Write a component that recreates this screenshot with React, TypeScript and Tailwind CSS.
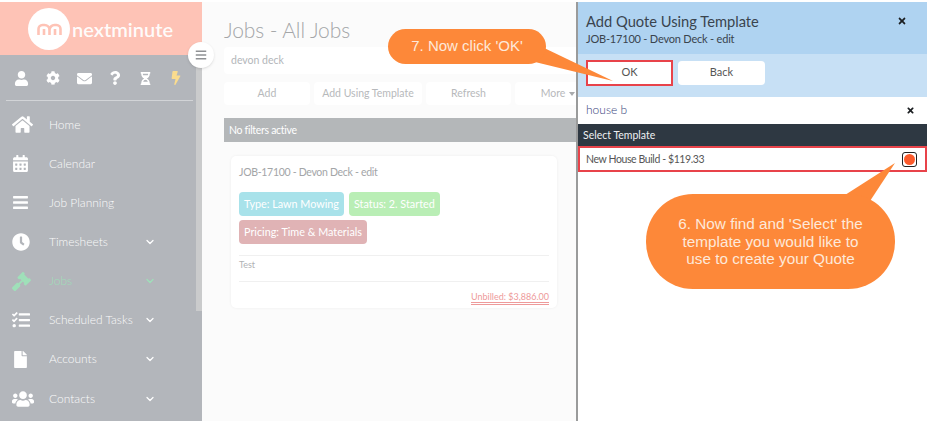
import React from "react";
import { FaUser, FaCog, FaEnvelope, FaQuestion, FaHourglassHalf, FaBolt, FaHome, FaCalendarAlt, FaBars, FaClock, FaGavel, FaTasks, FaFile, FaUsers, FaTimes } from "react-icons/fa";
import { LuChevronDown } from "react-icons/lu";

const nav = [
  { label: "Home", Icon: FaHome, size: 21 },
  { label: "Calendar", Icon: FaCalendarAlt, size: 17 },
  { label: "Job Planning", Icon: FaBars, size: 17 },
  { label: "Timesheets", Icon: FaClock, size: 18, chevron: true },
  { label: "Jobs", Icon: FaGavel, size: 19, chevron: true, active: true },
  { label: "Scheduled Tasks", Icon: FaTasks, size: 18, chevron: true },
  { label: "Accounts", Icon: FaFile, size: 17, chevron: true },
  { label: "Contacts", Icon: FaUsers, size: 22, chevron: true },
];

const toolbar = [
  { label: "Add", w: "w-[86px]" },
  { label: "Add Using Template", w: "w-[108px]" },
  { label: "Refresh", w: "w-[85px]" },
];

export default function App() {
  return (
    <div className="relative w-[927px] h-[421px] overflow-hidden bg-white pt-[2px] font-['Lato','Noto_Sans',sans-serif]">
      <div className="flex h-[419px]">
        {/* Sidebar */}
        <aside className="relative z-10 w-[202px] shrink-0 bg-[#b3b6bb] text-white">
          <div className="h-[53px] bg-[#fec3b6] flex items-center pl-[28px]">
            <div className="w-[42px] h-[42px] shrink-0 rounded-full bg-white flex items-center justify-center">
              <svg width="25" height="12" viewBox="0 0 25 12" fill="none" stroke="#fec3b6" strokeWidth="2.6">
                <path d="M1.5 12V6a4 4 0 0 1 4-4h2a5 5 0 0 1 5 5v5M12.5 12V7a5 5 0 0 1 5-5h2a4 4 0 0 1 4 4v6M7 12V6M18 12V6" />
              </svg>
            </div>
            <span className="ml-[2px] text-[20px] leading-none font-semibold text-white/95">nextminute</span>
          </div>
          <div className="absolute right-0 top-[53px] h-[256px] w-[6px] bg-[#cacbcc]" />
          <div className="absolute right-[-12px] top-[40px] w-[26px] h-[26px] rounded-full bg-white shadow-sm flex items-center justify-center text-[#8f9194]">
            <FaBars size={12} />
          </div>
          <div className="mx-[6px] w-[187px] h-[46px] border-b border-[#d2d4d7] flex items-center justify-between pl-[8px] pr-[10px] pt-[1px]">
            <FaUser size={15} />
            <FaCog size={14} />
            <FaEnvelope size={15} />
            <FaQuestion size={14} />
            <FaHourglassHalf size={13} />
            <FaBolt size={14} className="text-[#fbdc8e]" />
          </div>
          <nav className="pt-[4px]">
            {nav.map(({ label, Icon, size, chevron, active }) => (
              <div key={label} className={`flex items-center h-[39.15px] ${active ? "text-[#9fe0b9]" : "text-white"}`}>
                <div className="w-[49px] pl-[12px] flex items-center">
                  <Icon size={size} />
                </div>
                <span className="w-[93px] whitespace-nowrap text-[12px] font-light opacity-95">{label}</span>
                {chevron && <LuChevronDown size={12} strokeWidth={2.5} className="ml-[2px]" />}
              </div>
            ))}
          </nav>
        </aside>

        {/* Main */}
        <main className="relative flex-1 bg-[#fbfbfb] pl-[22px] pt-[14px] overflow-hidden">
          <h1 className="text-[21px] leading-[28px] font-light tracking-[-0.1px] text-[#a4a6a8]">Jobs - All Jobs</h1>
          <div className="mt-[3px] w-[400px] h-[27px] bg-white rounded-[4px] pl-[7px] pt-[1px] flex items-center text-[10.5px] text-[#b3b6ba]">devon deck</div>
          <div className="mt-[8px] flex gap-[4px] w-[420px] text-[10.5px] text-[#b7b9bb]">
            {toolbar.map((b) => (
              <div key={b.label} className={`${b.w} h-[23px] pt-[1px] bg-white rounded-[4px] flex items-center justify-center whitespace-nowrap`}>{b.label}</div>
            ))}
            <div className="w-[86px] h-[23px] pt-[1px] bg-white rounded-[4px] flex items-center justify-center gap-[4px]">
              More <span className="w-0 h-0 border-x-[3px] border-x-transparent border-t-[4px] border-t-[#a9abad]" />
            </div>
          </div>
          <div className="mt-[13px] w-[400px] h-[24px] pt-[1px] bg-[#b4b7b9] flex items-center pl-[5px] text-[10.5px] tracking-[-0.3px] text-white">No filters active</div>
          <section className="ml-[7px] mt-[14px] w-[326px] h-[152px] bg-white rounded-[5px] shadow-[0_0_3px_rgba(0,0,0,0.06)] px-[8px] pt-[9px]">
            <div className="text-[10.5px] leading-[14px] tracking-[-0.3px] text-[#a3a5a7]">JOB-17100 - Devon Deck - edit</div>
            <div className="mt-[13px] flex gap-[5px] text-[10.8px] text-white">
              <span className="h-[24px] px-[5px] rounded-[4px] bg-[#a8e2ea] flex items-center">Type: Lawn Mowing</span>
              <span className="h-[24px] px-[5px] rounded-[4px] bg-[#b9eeb5] flex items-center">Status: 2. Started</span>
            </div>
            <div className="mt-[4px] flex text-[10.8px] text-white">
              <span className="h-[24px] px-[5px] rounded-[4px] bg-[#e0b3b5] flex items-center">Pricing: Time &amp; Materials</span>
            </div>
            <div className="mt-[11px] border-t border-[#f0f0f0] h-[26px] pt-[3px] text-[9px] leading-[12px] text-[#b0b2b4]">Test</div>
            <div className="border-t border-[#f0f0f0] pt-[6px] text-right leading-[12px]">
              <span className="text-[9px] leading-[12px] text-[#ee9a9a] border-b-[3px] border-double border-[#ee9a9a]">Unbilled: $3,886.00</span>
            </div>
          </section>
        </main>

        {/* Panel */}
        <aside className="w-[351px] shrink-0 bg-white border-l-2 border-[#9a9b9b] text-[#33393f]">
          <header className="h-[52px] bg-[#afd3f1] pl-[8px] pr-[20px] pt-[8px] flex justify-between">
            <div>
              <div className="text-[14.7px] leading-[22px] text-[#3a444e]">Add Quote Using Template</div>
              <div className="text-[11px] leading-[13px] tracking-[-0.2px] text-[#3a444e]">JOB-17100 - Devon Deck - edit</div>
            </div>
            <FaTimes size={10} className="mt-[6px] text-[#1c1f22]" />
          </header>
          <div className="h-[43px] bg-[#c7e0f5] flex items-center gap-[5px] pl-[8px] pb-[6px]">
            <div className="w-[87px] h-[26px] bg-white border-2 border-[#e8434a] flex items-center justify-center text-[11px] text-[#555]">OK</div>
            <div className="w-[87px] h-[24px] bg-white rounded-[4px] flex items-center justify-center text-[11px] text-[#555]">Back</div>
          </div>
          <div className="h-[26px] flex items-center justify-between pl-[8px] pr-[12px] text-[12px] font-light text-[#36407a]">
            house b
            <FaTimes size={9} className="text-[#1c1f22]" />
          </div>
          <div className="mt-px h-[22px] pt-[1px] bg-[#2e3842] flex items-center pl-[5px] text-[10.5px] text-[#eef0f2]">Select Template</div>
          <div className="h-[26px] border-2 border-[#e8434a] flex items-center justify-between pl-[6px] pr-[8px] text-[10.5px] tracking-[-0.4px] text-[#555]">
            <span className="pt-[2px]">New House Build - $119.33</span>
            <div className="w-[15px] h-[15px] rounded-[3px] border border-[#222] flex items-center justify-center">
              <div className="w-[11px] h-[11px] rounded-full bg-[#fb5a2b]" />
            </div>
          </div>
        </aside>
      </div>

      {/* Callout: OK */}
      <svg className="absolute z-20 left-[530px] top-[40px]" width="90" height="45" viewBox="0 0 90 45">
        <path d="M10 6 L83 41 L5 22 Z" fill="#fd8839" />
      </svg>
      <div className="absolute z-20 left-[388px] top-[29px] w-[158px] h-[35px] rounded-[18px] bg-[#fd8839] flex items-center justify-center text-[15px] text-[#fde9da] font-['Liberation_Sans',sans-serif]">7. Now click 'OK'</div>

      {/* Callout: select */}
      <svg className="absolute z-20 left-[840px] top-[160px]" width="60" height="45" viewBox="0 0 60 45">
        <path d="M5 35 L55 3 L30 41 Z" fill="#fd8839" />
      </svg>
      <div className="absolute z-20 left-[646px] top-[194px] w-[249px] h-[95px] rounded-[47px] bg-[#fd8839] flex items-center justify-center text-center text-[15.3px] leading-[17.5px] text-[#fde9da] font-['Liberation_Sans',sans-serif]">
        <div>6. Now find and 'Select' the<br />template you would like to<br />use to create your Quote</div>
      </div>
    </div>
  );
}
